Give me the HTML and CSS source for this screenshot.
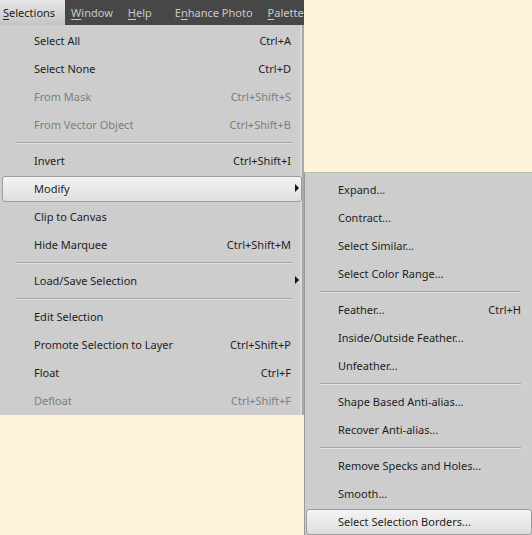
FILE: index.html
```html
<!DOCTYPE html>
<html>
<head>
<meta charset="utf-8">
<link rel="stylesheet" href="styles.css">
</head>
<body>
<div class="screen">
  <div class="menubar">
    <span class="mb-item active"><u>S</u>elections</span>
    <span class="mb-item"><u>W</u>indow</span>
    <span class="mb-item"><u>H</u>elp</span>
    <span class="mb-sep"></span>
    <span class="mb-item">E<u>n</u>hance Photo</span>
    <span class="mb-item"><u>P</u>alette</span>
  </div>
  <div class="menu main">
    <div class="item"><span>Select All</span><span class="key">Ctrl+A</span></div>
    <div class="item"><span>Select None</span><span class="key">Ctrl+D</span></div>
    <div class="item off"><span>From Mask</span><span class="key">Ctrl+Shift+S</span></div>
    <div class="item off"><span>From Vector Object</span><span class="key">Ctrl+Shift+B</span></div>
    <div class="sep"></div>
    <div class="item"><span>Invert</span><span class="key">Ctrl+Shift+I</span></div>
    <div class="item hl sub"><span>Modify</span><span class="arrow"></span></div>
    <div class="item"><span>Clip to Canvas</span></div>
    <div class="item"><span>Hide Marquee</span><span class="key">Ctrl+Shift+M</span></div>
    <div class="sep"></div>
    <div class="item sub"><span>Load/Save Selection</span><span class="arrow"></span></div>
    <div class="sep"></div>
    <div class="item"><span>Edit Selection</span></div>
    <div class="item"><span>Promote Selection to Layer</span><span class="key">Ctrl+Shift+P</span></div>
    <div class="item"><span>Float</span><span class="key">Ctrl+F</span></div>
    <div class="item off"><span>Defloat</span><span class="key">Ctrl+Shift+F</span></div>
  </div>
  <div class="menu submenu">
    <div class="item"><span>Expand...</span></div>
    <div class="item"><span>Contract...</span></div>
    <div class="item"><span>Select Similar...</span></div>
    <div class="item"><span>Select Color Range...</span></div>
    <div class="sep"></div>
    <div class="item"><span>Feather...</span><span class="key">Ctrl+H</span></div>
    <div class="item"><span>Inside/Outside Feather...</span></div>
    <div class="item"><span>Unfeather...</span></div>
    <div class="sep"></div>
    <div class="item"><span>Shape Based Anti-alias...</span></div>
    <div class="item"><span>Recover Anti-alias...</span></div>
    <div class="sep"></div>
    <div class="item"><span>Remove Specks and Holes...</span></div>
    <div class="item"><span>Smooth...</span></div>
    <div class="item hl"><span>Select Selection Borders...</span></div>
  </div>
</div>
</body>
</html>
```
FILE: styles.css
```css
html, body {
  margin: 0;
  padding: 0;
  background: #fbf3da;
  height: 100%;
  overflow: hidden;
}
.screen {
  position: relative;
  width: 532px;
  height: 535px;
  font-family: "Noto Sans", "Open Sans", sans-serif;
  font-size: 11px;
}
.menubar {
  width: 304px;
  height: 25px;
  background: #474747;
  display: flex;
  align-items: stretch;
  overflow: hidden;
  white-space: nowrap;
}
.mb-item {
  color: #c9c9c9;
  padding: 0 8px 0 4px;
  line-height: 25px;
  margin-right: 3px;
}
.mb-item u { text-decoration: underline; text-underline-offset: 2px; }
.mb-item.active {
  color: #1c1c1c;
  background: linear-gradient(#e6e6e6, #c4c4c4);
  padding: 0 10px 0 3px;
  margin-right: 2px;
}
.mb-item:nth-child(3) { margin-right: 4px; }
.mb-sep {
  width: 1px;
  background: #6a6a6a;
  margin: 4px 7px 5px 0;
}
.menu {
  background: #cdcdcd;
  box-sizing: border-box;
}
.main {
  width: 304px;
  height: 390px;
  padding-top: 2px;
  border-right: 2px solid #a9a9a9;
  box-shadow: inset -2px 0 0 #dadada;
}
.submenu {
  position: absolute;
  left: 304px;
  top: 172px;
  width: 228px;
  height: 363px;
  padding-top: 3px;
  border-top: 1px solid #b8c0a8;
  border-left: 1px solid #9a9a9a;
}
.item {
  height: 28px;
  display: flex;
  align-items: center;
  justify-content: space-between;
  padding: 0 11px 2px 34px;
  color: #1e1e1e;
  position: relative;
  box-sizing: border-box;
}
.submenu .item { padding: 0 11px 2px 33px; }
.item.off { color: #7d7d7d; }
.item.hl::before {
  content: "";
  position: absolute;
  left: 2px;
  right: 0;
  top: 1px;
  bottom: 1px;
  border: 1px solid #9c9c9c;
  border-radius: 3px;
  background: linear-gradient(#f4f4f4, #dedede);
  z-index: 0;
}
.submenu .item.hl::before { left: 1px; right: 0; }
.item span { position: relative; z-index: 1; }
.arrow {
  position: absolute !important;
  right: 3px;
  top: 9px;
  width: 0;
  height: 0;
  border-top: 4px solid transparent;
  border-bottom: 4px solid transparent;
  border-left: 4px solid #111;
}
.sep {
  height: 8px;
  position: relative;
}
.sep::after {
  content: "";
  position: absolute;
  left: 16px;
  right: 10px;
  top: 3px;
  height: 1px;
  background: #a6a6a6;
  border-bottom: 1px solid #e2e2e2;
}
.submenu .sep::after { left: 15px; right: 11px; }
```
